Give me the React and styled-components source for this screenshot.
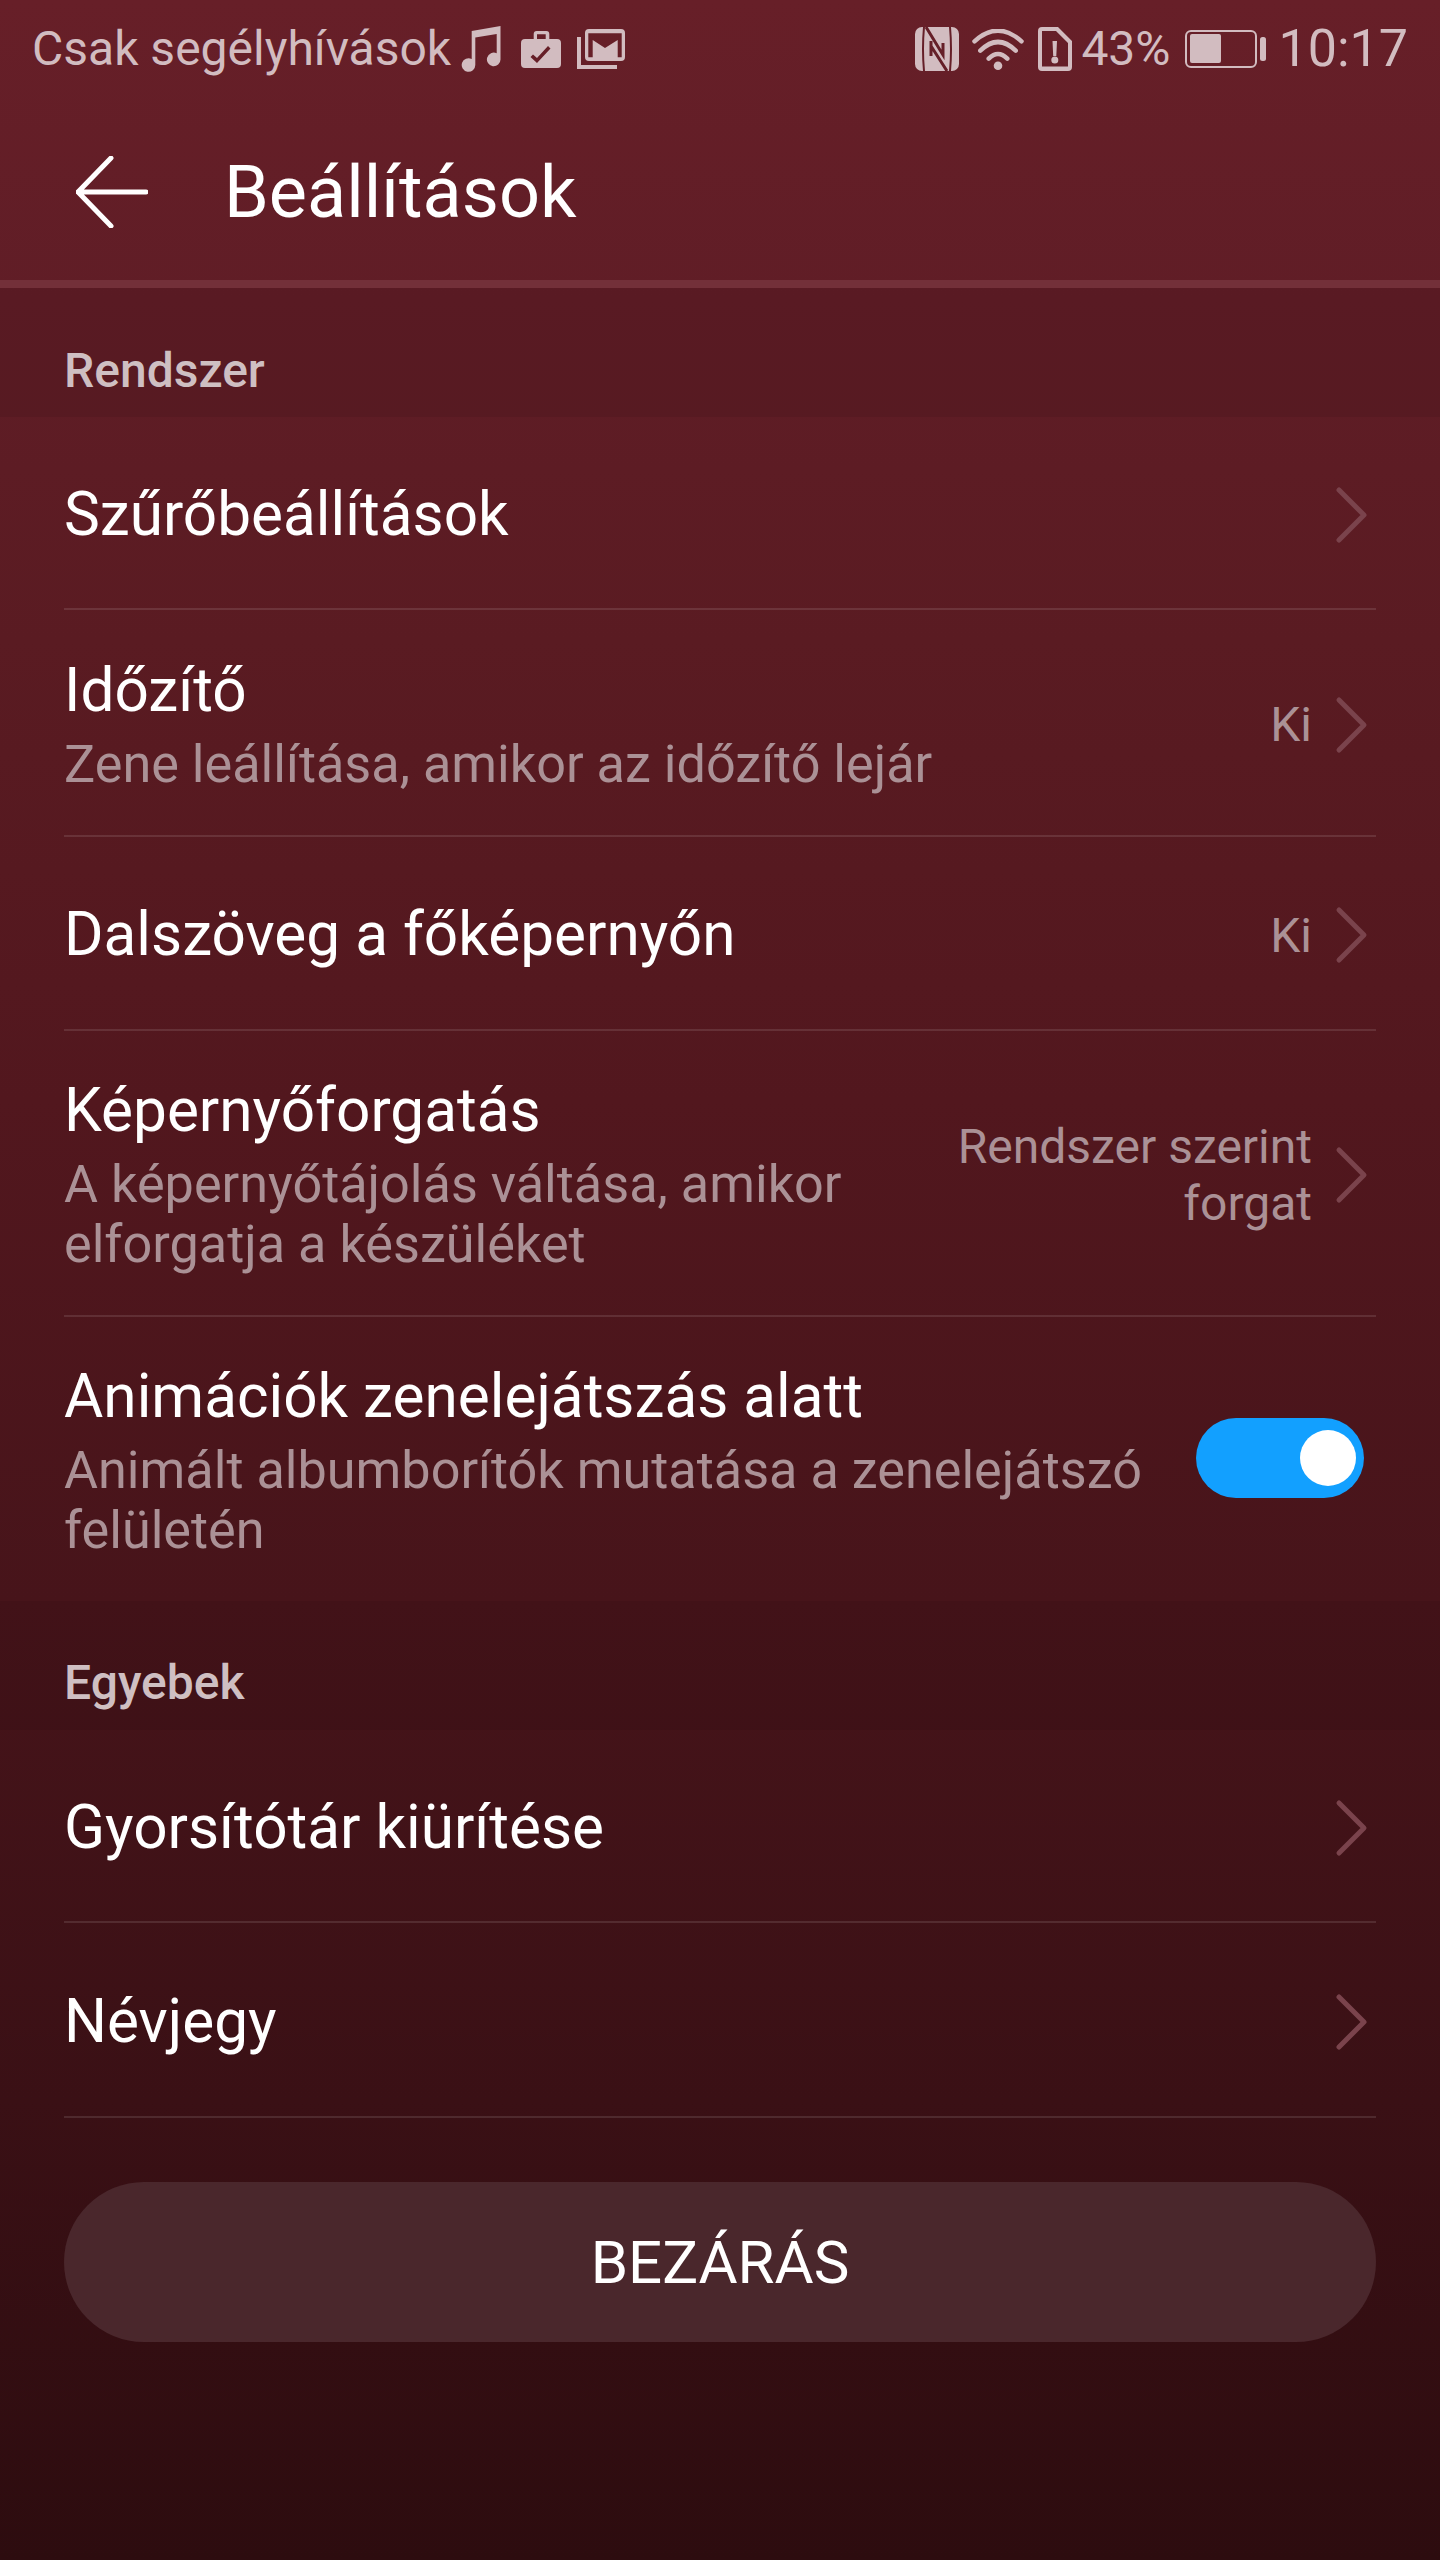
import React from 'react'
import styled, { createGlobalStyle } from 'styled-components'

const Global = createGlobalStyle`
html,body{margin:0;padding:0;background:#2d0c0f;}
*{box-sizing:border-box;}
`
const Page = styled.div`
width:1440px;
height:2560px;
font-family:Roboto,"Liberation Sans",sans-serif;
background:linear-gradient(180deg,#671f28 0%,#601d26 300px,#5a1b22 640px,#52171e 1100px,#47141a 1600px,#3a1015 2100px,#2d0c0f 2560px);
overflow:hidden;
`
const StatusBar = styled.div`
height:100px;
padding:16px 32px 0 32px;
display:flex;
justify-content:space-between;
align-items:flex-start;
color:#d2bcc0;
font-size:48px;
line-height:66px;
`
const StatusSide = styled.div`
display:flex;
align-items:center;
height:66px;
`
const StatusIcon = styled.svg`
flex:none;
margin-left:${p=>p.$ml||0}px;
fill:#d2bcc0;
`
const Percent = styled.span`
margin-left:9px;
`
const Time = styled.span`
font-size:52px;
margin-left:13px;
`
const Header = styled.div`
height:188px;
display:flex;
align-items:center;
padding:4px 0 0 76px;
border-bottom:8px solid #733039;
`
const Title = styled.div`
margin-left:76px;
color:#fff;
font-size:72px;
`
const SectionLabel = styled.div`
height:129px;
padding:${p=>p.$pt}px 64px 0;
background:rgba(0,0,0,.07);
color:#cfbfc2;
font-size:48px;
font-weight:500;
line-height:56px;
`
const Row = styled.div`
height:${p=>p.$h}px;
margin:0 64px;
padding-top:4px;
display:flex;
align-items:center;
border-bottom:${p=>p.$last?'none':'2px solid rgba(255,255,255,.11)'};
`
const RowText = styled.div`
flex:1;
min-width:0;
`
const RowTitle = styled.div`
color:#fff;
font-size:60.3px;
line-height:72px;
`
const RowSub = styled.div`
color:#ab9196;
font-size:52.2px;
line-height:60px;
margin-top:8px;
max-width:${p=>p.$w||1100}px;
`
const RowValue = styled.div`
color:#ab9196;
font-size:48px;
line-height:57px;
text-align:right;
width:${p=>p.$w||'auto'};
`
const Chevron = styled.svg`
width:34px;
height:58px;
margin:0 7px 0 23px;
flex:none;
`
const Toggle = styled.div`
width:168px;
height:80px;
border-radius:40px;
background:#12a0ff;
margin:0 12px 6px 48px;
padding:12px 8px;
flex:none;
display:flex;
justify-content:flex-end;
`
const Knob = styled.div`
width:56px;
height:56px;
border-radius:50%;
background:#fff;
`
const CloseButton = styled.div`
margin:64px 64px 0;
height:160px;
border-radius:80px;
background:#4a272c;
color:#fff;
font-size:60px;
display:flex;
align-items:center;
justify-content:center;
`

const Arrow = () => (
  <Chevron viewBox="0 0 34 58" fill="none" stroke="#7a434c" strokeWidth="5" strokeLinecap="round" strokeLinejoin="round">
    <path d="M4 4 L29 29 L4 54" />
  </Chevron>
)

const rows1 = [
  {h:193,title:'Szűrőbeállítások'},
  {h:227,title:'Időzítő',sub:'Zene leállítása, amikor az időzítő lejár',value:'Ki'},
  {h:194,title:'Dalszöveg a főképernyőn',value:'Ki'},
  {h:286,title:'Képernyőforgatás',sub:'A képernyőtájolás váltása, amikor elforgatja a készüléket',value:'Rendszer szerint forgat',vw:'400px',sw:860},
]

const SettingRow = ({r}) => (
  <Row $h={r.h}>
    <RowText>
      <RowTitle>{r.title}</RowTitle>
      {r.sub && <RowSub $w={r.sw}>{r.sub}</RowSub>}
    </RowText>
    {r.value && <RowValue $w={r.vw}>{r.value}</RowValue>}
    <Arrow />
  </Row>
)

export default function App() {
  return (
    <Page>
      <Global />
      <StatusBar>
        <StatusSide>
          <span>Csak segélyhívások</span>
          <StatusIcon $ml={10} width="40" height="46" viewBox="0 0 40 46">
            <path d="M10.7 5 L39.5 0 V33.3 A6.8 6.8 0 1 1 35.7 27.3 V8 L14.3 11.5 V39 A6.8 6.8 0 1 1 10.7 33 Z" />
          </StatusIcon>
          <StatusIcon $ml={20} width="40" height="37" viewBox="0 0 40 37">
            <path fillRule="evenodd" d="M4 8 H12.7 V3 Q12.7 0 15.7 0 H25.3 Q28.3 0 28.3 3 V8 H36 Q40 8 40 12 V33 Q40 37 36 37 H4 Q0 37 0 33 V12 Q0 8 4 8 Z M16 8 H24.7 V3.3 H16 Z M9.5 26 L12 23.5 L16 27 L27 15 L29.5 17.5 L16 32 Z" />
          </StatusIcon>
          <StatusIcon $ml={16} width="48" height="40" viewBox="0 0 48 40">
            <path fillRule="evenodd" d="M12 0 H44 Q48 0 48 4 V28 Q48 32 44 32 H12 Q8 32 8 28 V4 Q8 0 12 0 Z M11.3 4.3 V28.3 H15.7 V11 L28 19 L40.7 11 V28.3 H44.7 V4.3 Z" />
            <path d="M0 8 H4 V36 H40 V40 H0 Z" />
          </StatusIcon>
        </StatusSide>
        <StatusSide>
          <StatusIcon width="44" height="44" viewBox="0 0 44 44">
            <rect width="44" height="44" rx="7" />
            <path d="M9 0 Q7 22 9 44 M35 0 Q37 22 35 44" fill="none" stroke="#651f28" strokeWidth="2" />
            <path d="M11 0 L28 28 V16 M16 14 V29 M16 19 L32 44" fill="none" stroke="#651f28" strokeWidth="3" />
          </StatusIcon>
          <StatusIcon $ml={13} width="52" height="41" viewBox="0 0 52 41">
            <path d="M2.5 12.3 Q26 -8.9 49.5 12.3 M8.3 21.7 Q26 4.3 43.7 21.7 M16.7 29.7 Q26 20.3 35.3 29.7" fill="none" stroke="#d2bcc0" strokeWidth="4.5" strokeLinecap="round" />
            <circle cx="26" cy="36.7" r="4.3" />
          </StatusIcon>
          <StatusIcon $ml={14} width="34" height="44" viewBox="0 0 34 44">
            <path fillRule="evenodd" d="M4 0 H20 L34 14 V40 Q34 44 30 44 H4 Q0 44 0 40 V4 Q0 0 4 0 Z M4 4 V39.5 H30 V16 L18 4 Z M14.5 14 H19 L18.3 29 H15.2 Z M16.8 29.5 A3.5 3.5 0 1 1 16.8 36.5 A3.5 3.5 0 1 1 16.8 29.5 Z" />
          </StatusIcon>
          <Percent>43%</Percent>
          <StatusIcon $ml={14} width="81" height="38" viewBox="0 0 81 38">
            <rect x="1" y="1" width="70" height="36" rx="5" fill="none" stroke="#d2bcc0" strokeWidth="2" />
            <rect x="5" y="4" width="31" height="29" rx="2" />
            <rect x="75" y="7" width="6" height="24" rx="2.5" />
          </StatusIcon>
          <Time>10:17</Time>
        </StatusSide>
      </StatusBar>
      <Header>
        <svg width="72" height="72" viewBox="0 0 72 72" fill="none" stroke="#fff" strokeWidth="5" strokeLinecap="round" strokeLinejoin="round">
          <path d="M2 36 H70 M35 2 L2 36 L35 70" />
        </svg>
        <Title>Beállítások</Title>
      </Header>
      <SectionLabel $pt={55}>Rendszer</SectionLabel>
      {rows1.map(r => <SettingRow key={r.title} r={r} />)}
      <Row $h={284} $last>
        <RowText>
          <RowTitle>Animációk zenelejátszás alatt</RowTitle>
          <RowSub $w={1110}>Animált albumborítók mutatása a zenelejátszó felületén</RowSub>
        </RowText>
        <Toggle><Knob /></Toggle>
      </Row>
      <SectionLabel $pt={54}>Egyebek</SectionLabel>
      <SettingRow r={{h:193,title:'Gyorsítótár kiürítése'}} />
      <SettingRow r={{h:195,title:'Névjegy'}} />
      <CloseButton>BEZÁRÁS</CloseButton>
    </Page>
  )
}
